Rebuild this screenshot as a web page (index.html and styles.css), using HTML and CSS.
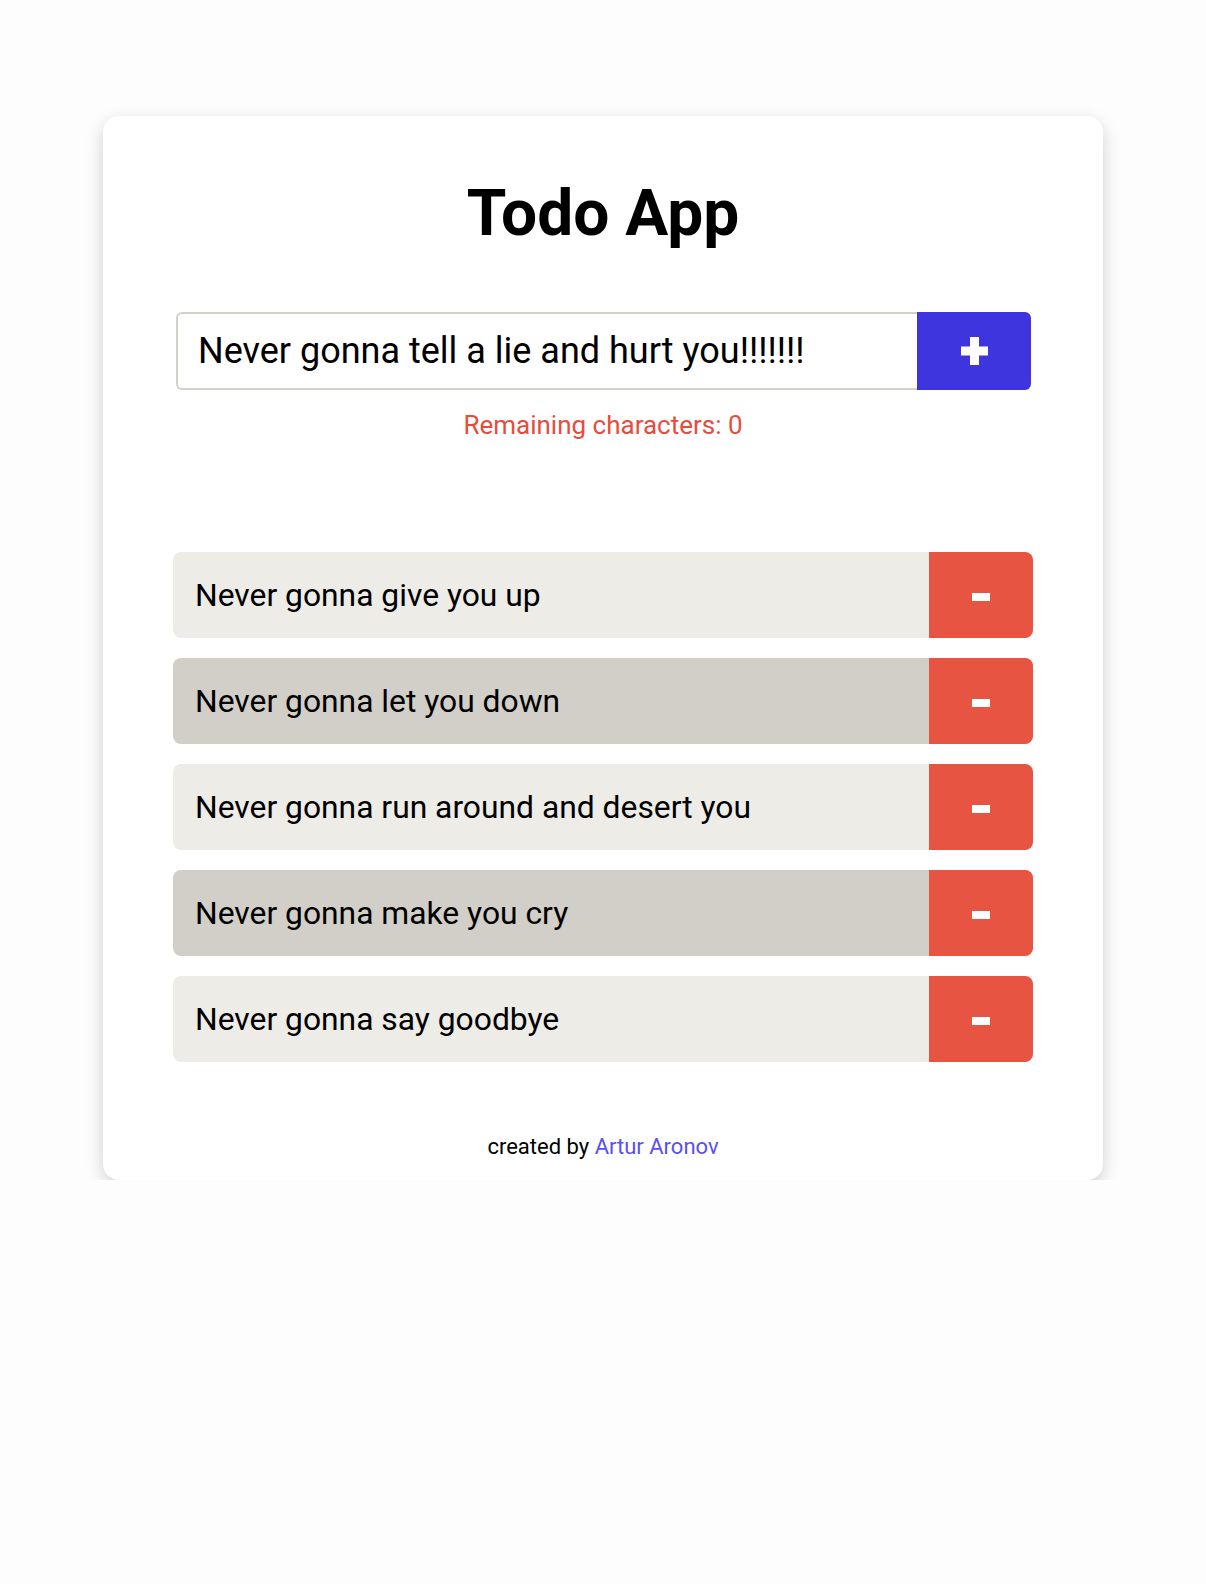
FILE: index.html
```html
<!DOCTYPE html>
<html lang="en">
<head>
<meta charset="utf-8">
<title>Todo App</title>
<link rel="stylesheet" href="styles.css">
</head>
<body>
<main class="card">
  <h1 class="title">Todo App</h1>
  <form class="add-form">
    <input class="add-input" id="todo-input" type="text" maxlength="42" value="Never gonna tell a lie and hurt you!!!!!!!" autofocus>
    <button class="add-btn" type="button" aria-label="Add">
      <svg width="27" height="28" viewBox="0 0 27 28"><rect x="9" y="0" width="9" height="28" fill="#fff"/><rect x="0" y="9.5" width="27" height="9" fill="#fff"/></svg>
    </button>
  </form>
  <p class="remaining">Remaining characters: 0</p>
  <ul class="todo-list">
    <li class="todo-item"><span class="todo-text">Never gonna give you up</span><button class="del-btn" type="button" aria-label="Delete"><svg width="18" height="8" viewBox="0 0 18 8"><rect width="18" height="8" fill="#fff"/></svg></button></li>
    <li class="todo-item alt"><span class="todo-text">Never gonna let you down</span><button class="del-btn" type="button" aria-label="Delete"><svg width="18" height="8" viewBox="0 0 18 8"><rect width="18" height="8" fill="#fff"/></svg></button></li>
    <li class="todo-item"><span class="todo-text">Never gonna run around and desert you</span><button class="del-btn" type="button" aria-label="Delete"><svg width="18" height="8" viewBox="0 0 18 8"><rect width="18" height="8" fill="#fff"/></svg></button></li>
    <li class="todo-item alt"><span class="todo-text">Never gonna make you cry</span><button class="del-btn" type="button" aria-label="Delete"><svg width="18" height="8" viewBox="0 0 18 8"><rect width="18" height="8" fill="#fff"/></svg></button></li>
    <li class="todo-item"><span class="todo-text">Never gonna say goodbye</span><button class="del-btn" type="button" aria-label="Delete"><svg width="18" height="8" viewBox="0 0 18 8"><rect width="18" height="8" fill="#fff"/></svg></button></li>
  </ul>
  <footer class="footer">created by <a class="footer-link" href="#">Artur Aronov</a></footer>
</main>
<script src="script.js"></script>
</body>
</html>
```

FILE: styles.css
```css
* { box-sizing: border-box; }

body {
  margin: 0;
  background: #fdfdfd;
  font-family: Roboto, "Liberation Sans", sans-serif;
  color: #000;
}

.card {
  width: 1000px;
  margin: 116px auto 0;
  background: #fff;
  border-radius: 16px;
  box-shadow: 0 6px 18px rgba(0, 0, 0, 0.18);
  padding: 61px 70px 20px;
}

.title {
  margin: 0;
  text-align: center;
  font-size: 64px;
  line-height: 74px;
  font-weight: 700;
}

.add-form {
  display: flex;
  height: 78px;
  margin: 61px 2px 0 3px;
}

.add-input {
  flex: 1;
  min-width: 0;
  height: 100%;
  border: 2px solid #d3d1ca;
  border-right: none;
  border-radius: 6px 0 0 6px;
  padding: 0 0 0 20px;
  font-family: inherit;
  font-size: 36px;
  color: #000;
  caret-color: #000;
  background: #fff;
  outline: none;
}

.add-btn {
  width: 114px;
  height: 100%;
  border: none;
  border-radius: 0 6px 6px 0;
  background: #3f35de;
  display: flex;
  align-items: center;
  justify-content: center;
  padding: 0;
}

.remaining {
  margin: 20px 0 0;
  text-align: center;
  color: #e74c3c;
  font-size: 26px;
  line-height: 30px;
}

.todo-list {
  list-style: none;
  margin: 112px 0 0;
  padding: 0;
  display: flex;
  flex-direction: column;
  gap: 20px;
}

.todo-item {
  display: flex;
  height: 86px;
  border-radius: 8px;
  overflow: hidden;
  background: #edece7;
}

.todo-item.alt {
  background: #d1cfc7;
}

.todo-text {
  flex: 1;
  display: flex;
  align-items: center;
  padding: 0 0 0 22px;
  font-size: 31.8px;
}

.del-btn {
  width: 104px;
  border: none;
  padding: 3px 0 0;
  background: #e85442;
  display: flex;
  align-items: center;
  justify-content: center;
}

.footer {
  margin-top: 72px;
  text-align: center;
  font-size: 22px;
  line-height: 26px;
}

.footer-link {
  color: #5a4ff6;
  text-decoration: none;
}
```

FILE: script.js
```js
var input = document.getElementById('todo-input');
input.focus();
input.setSelectionRange(input.value.length, input.value.length);
```
